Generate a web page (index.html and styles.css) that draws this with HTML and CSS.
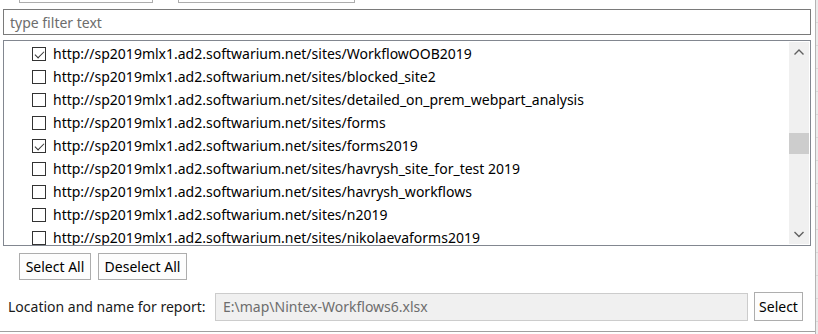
FILE: index.html
```html
<!DOCTYPE html>
<html lang="en">
<head>
    <meta charset="UTF-8">
    <title>Sites</title>
    <link rel="stylesheet" href="styles.css">
</head>
<body>
    <div class="dialog">
        <div class="panel">
            <!-- Buttons of the section above, scrolled out of view -->
            <div class="top-row">
                <div class="cut-box first"></div>
                <div class="cut-box second"></div>
            </div>

            <input class="filter" type="text" placeholder="type filter text">

            <!-- Site list -->
            <div class="site-list">
                <div class="rows">
                    <label class="row"><span class="check checked"></span>http://sp2019mlx1.ad2.softwarium.net/sites/WorkflowOOB2019</label>
                    <label class="row"><span class="check"></span>http://sp2019mlx1.ad2.softwarium.net/sites/blocked_site2</label>
                    <label class="row"><span class="check"></span>http://sp2019mlx1.ad2.softwarium.net/sites/detailed_on_prem_webpart_analysis</label>
                    <label class="row"><span class="check"></span>http://sp2019mlx1.ad2.softwarium.net/sites/forms</label>
                    <label class="row"><span class="check checked"></span>http://sp2019mlx1.ad2.softwarium.net/sites/forms2019</label>
                    <label class="row"><span class="check"></span>http://sp2019mlx1.ad2.softwarium.net/sites/havrysh_site_for_test 2019</label>
                    <label class="row"><span class="check"></span>http://sp2019mlx1.ad2.softwarium.net/sites/havrysh_workflows</label>
                    <label class="row"><span class="check"></span>http://sp2019mlx1.ad2.softwarium.net/sites/n2019</label>
                    <label class="row"><span class="check"></span>http://sp2019mlx1.ad2.softwarium.net/sites/nikolaevaforms2019</label>
                </div>
                <div class="scrollbar">
                    <svg class="arrow" width="20" height="20" viewBox="0 0 20 20"><path d="M5.5 12.5 L10 8 L14.5 12.5" fill="none" stroke="#606060" stroke-width="1.4"/></svg>
                    <div class="track">
                        <div class="thumb"></div>
                    </div>
                    <svg class="arrow" width="20" height="20" viewBox="0 0 20 20"><path d="M5.5 8 L10 12.5 L14.5 8" fill="none" stroke="#606060" stroke-width="1.4"/></svg>
                </div>
            </div>

            <div class="list-buttons">
                <button class="btn select-all">Select All</button>
                <button class="btn deselect-all">Deselect All</button>
            </div>

            <div class="report-row">
                <span class="report-label">Location and name for report:</span>
                <input class="report-path" type="text" value="E:\map\Nintex-Workflows6.xlsx" disabled>
                <button class="btn select">Select</button>
            </div>
        </div>
        <div class="side-edge"></div>
    </div>
</body>
</html>
```

FILE: styles.css
```css
* {
    margin: 0;
    padding: 0;
    box-sizing: border-box;
}

body {
    font-family: 'Noto Sans', 'Open Sans', sans-serif;
    font-size: 14px;
    color: #000;
    background: #fff;
}

.dialog {
    display: flex;
    width: 818px;
    height: 334px;
    overflow: hidden;
}

.panel {
    width: 815px;
    height: 332px;
    border-bottom: 1px solid #a0a0a0;
    display: flex;
    flex-direction: column;
}

.side-edge {
    width: 3px;
    height: 334px;
    border-left: 1px solid #b4b4b4;
    background: repeating-linear-gradient(to bottom, #ececec 0, #ececec 22px, #d9d9d9 22px, #d9d9d9 23px);
}

/* buttons cut off at the top edge */
.top-row {
    display: flex;
    height: 3px;
}

.cut-box {
    height: 3px;
    border: 1px solid #adadad;
    border-top: none;
}

.cut-box.first {
    margin-left: 19px;
    width: 134px;
}

.cut-box.second {
    margin-left: 25px;
    width: 177px;
}

.filter {
    margin: 6px 0 0 3px;
    width: 808px;
    height: 26px;
    border: 1px solid #7a7a7a;
    padding: 0 6px;
    font-family: inherit;
    font-size: 14px;
    color: #000;
    outline: none;
}

.filter::placeholder {
    color: #6d6d6d;
}

.site-list {
    margin: 5px 0 0 3px;
    width: 808px;
    height: 206px;
    border: 1px solid #828790;
    display: flex;
    overflow: hidden;
}

.rows {
    flex: 1;
    padding-top: 1px;
    overflow: hidden;
}

.row {
    display: flex;
    align-items: center;
    height: 23px;
    padding-left: 28px;
    white-space: nowrap;
}

.check {
    width: 14px;
    height: 14px;
    border: 1px solid #333;
    background: #fff;
    margin-right: 7px;
    flex-shrink: 0;
    position: relative;
}

.check.checked::after {
    content: "";
    position: absolute;
    left: 4px;
    top: 1px;
    width: 4px;
    height: 8px;
    border: solid #333;
    border-width: 0 1px 1px 0;
    transform: rotate(45deg);
}

.scrollbar {
    width: 20px;
    margin: 1px 1px 1px 0;
    background: #f0f0f0;
    display: flex;
    flex-direction: column;
}

.arrow {
    display: block;
    flex-shrink: 0;
}

.track {
    flex: 1;
    padding-top: 71px;
}

.thumb {
    height: 21px;
    background: #cdcdcd;
}

.list-buttons {
    display: flex;
    gap: 7px;
    margin: 7px 0 0 19px;
}

.btn {
    font-family: inherit;
    font-size: 14px;
    color: #000;
    background: #fdfdfd;
    border: 1px solid #adadad;
    height: 27px;
    padding: 0 4px;
}

.select-all {
    width: 72px;
}

.deselect-all {
    width: 89px;
}

.report-row {
    display: flex;
    align-items: center;
    margin-top: 12px;
    padding-left: 8px;
}

.report-label {
    width: 207px;
    color: #1a1a1a;
}

.report-path {
    width: 533px;
    height: 28px;
    border: 1px solid #cccccc;
    background: #f0f0f0;
    color: #6d6d6d;
    font-family: inherit;
    font-size: 14px;
    padding: 0 7px;
}

.btn.select {
    margin-left: 6px;
    width: 49px;
    height: 29px;
}
```
